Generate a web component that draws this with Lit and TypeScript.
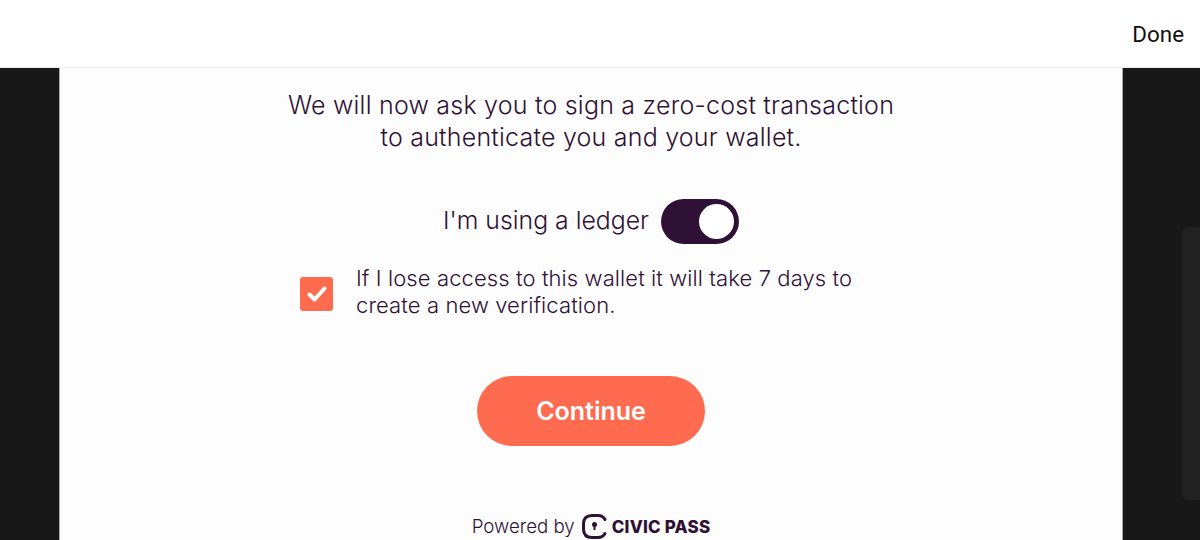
import { html, css, LitElement } from 'lit';
import { customElement } from 'lit/decorators.js';

@customElement('app-root')
export class AppRoot extends LitElement {
    static styles = css`
        :host {
            display: block;
            width: 1200px;
            height: 540px;
            overflow: hidden;
            background: #181818;
            font-family: "Inter", "Liberation Sans", sans-serif;
            color: #2f1136;
        }

        .header {
            height: 68px;
            background: #fff;
            border-bottom: 1px solid #ececec;
            box-sizing: border-box;
            display: flex;
            align-items: center;
            justify-content: flex-end;
            padding: 1px 16px 0 0;
            font-family: "Roboto", sans-serif;
            font-size: 22.4px;
            color: #111;
        }

        .stage {
            position: relative;
            height: 472px;
            display: flex;
            padding: 0 77px 0 59px;
        }

        .scrollbar {
            position: absolute;
            right: 0;
            top: 159px;
            width: 18px;
            height: 273px;
            background: #212121;
            border-radius: 6px 0 0 6px;
        }

        .panel {
            flex: 1;
            background: #fdfdfd;
            border: solid #aaa;
            border-width: 0 1px;
            display: flex;
            flex-direction: column;
            align-items: center;
            padding-top: 21px;
        }

        .intro {
            margin: 0;
            font-size: 25px;
            letter-spacing: 0.22px;
            line-height: 32px;
            font-weight: 300;
            text-align: center;
        }

        .toggle-row {
            display: flex;
            align-items: center;
            gap: 12px;
            margin-top: 46px;
            font-size: 24.8px;
            font-weight: 300;
        }

        .toggle-label {
            padding-bottom: 4px;
        }

        .toggle {
            width: 78px;
            height: 45px;
            border-radius: 23px;
            background: #2f1136;
            display: flex;
            align-items: center;
            justify-content: flex-end;
            padding-right: 5px;
            box-sizing: border-box;
        }

        .knob {
            width: 35px;
            height: 35px;
            border-radius: 50%;
            background: #fff;
        }

        .check-row {
            display: flex;
            align-items: center;
            gap: 23px;
            width: 582px;
            margin-top: 21px;
            font-size: 22px;
            letter-spacing: 0.1px;
            line-height: 27px;
            font-weight: 300;
        }

        .box {
            flex: none;
            width: 33px;
            height: 34px;
            margin-top: 3px;
            border-radius: 3px;
            background: #ff6b4e;
            display: flex;
            align-items: center;
            justify-content: center;
        }

        .button {
            margin-top: 57px;
            width: 228px;
            height: 70px;
            border: none;
            border-radius: 35px;
            background: #ff6b4e;
            color: #fff;
            font: 600 25px "Inter", sans-serif;
        }

        .powered {
            display: flex;
            align-items: center;
            gap: 6px;
            margin-top: 67px;
            font-size: 18.7px;
            font-weight: 300;
        }

        .brand {
            display: flex;
            align-items: center;
            gap: 4px;
            font-weight: 800;
            font-size: 17px;
            letter-spacing: 0.2px;
        }
    `

    render() {
        return html`
            <div class="header">Done</div>
            <div class="stage">
                <div class="panel">
                    <p class="intro">We will now ask you to sign a zero-cost transaction<br />to authenticate you and your wallet.</p>
                    <div class="toggle-row">
                        <span class="toggle-label">I'm using a ledger</span>
                        <div class="toggle"><div class="knob"></div></div>
                    </div>
                    <div class="check-row">
                        <div class="box">
                            <svg width="22" height="18" viewBox="0 0 22 18" fill="none" stroke="#fff" stroke-width="4" stroke-linecap="round" stroke-linejoin="round"><path d="M3.500 9.500l5 5L18.500 3.500" /></svg>
                        </div>
                        <span>If I lose access to this wallet it will take 7 days to<br />create a new verification.</span>
                    </div>
                    <button class="button">Continue</button>
                    <div class="powered">
                        Powered by
                        <span class="brand">
                            <svg width="27" height="27" viewBox="0 0 27 27" fill="none"><path d="M24 6.500C22.500 3.800 20 2.500 17 2.500H11C5.500 2.500 2.500 5.500 2.500 11v5C2.500 21.500 5.500 24.500 11 24.500H17c3 0 5.500-1.300 7-4" stroke="#2f1136" stroke-width="3" stroke-linecap="round" /><circle cx="13.500" cy="11.500" r="2.500" fill="#2f1136" /><path d="M12.500 12h2v5h-2z" fill="#2f1136" /></svg>
                            CIVIC PASS
                        </span>
                    </div>
                </div>
                <div class="scrollbar"></div>
            </div>
        `
    }
}

declare global {
    interface HTMLElementTagNameMap {
        'app-root': AppRoot;
    }
}
